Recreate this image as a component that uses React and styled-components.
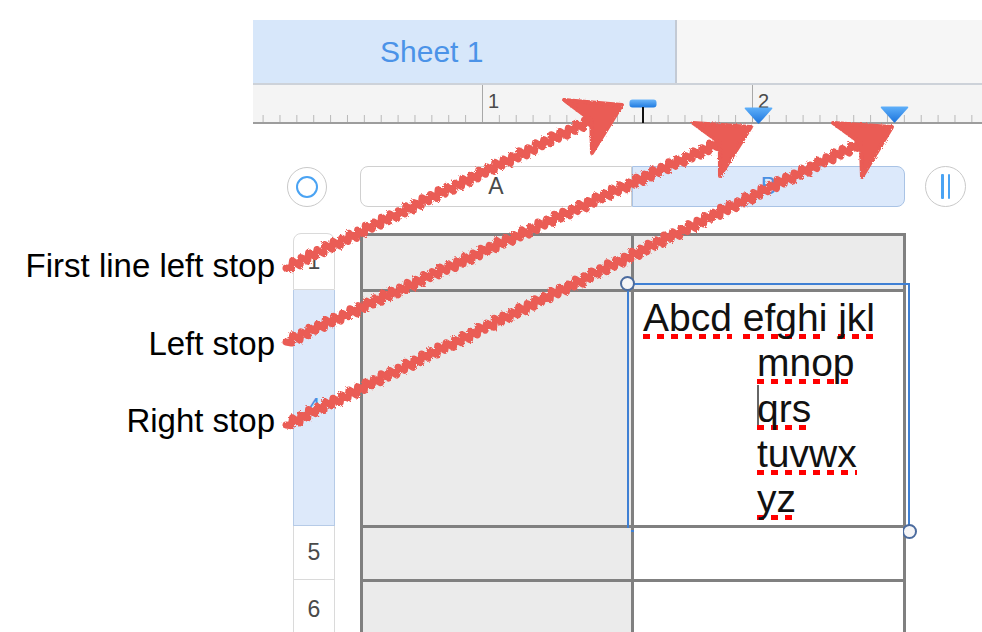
import styled, { createGlobalStyle } from "styled-components";

const GlobalStyle = createGlobalStyle`
  html, body {
    margin: 0;
    padding: 0;
    background: #fff;
  }
  body {
    font-family: "Liberation Sans", Arial, sans-serif;
  }
`;

const Page = styled.div`
  position: relative;
  width: 982px;
  height: 632px;
  overflow: hidden;
  background: #fff;
`;

/* ---------- top: sheet tabs and ruler ---------- */

const TopBand = styled.div`
  margin-left: 253px;
  padding-top: 20px;
`;

const TabBar = styled.div`
  display: flex;
  height: 63px;
  background: #f6f6f6;
  border-bottom: 2px solid #cdd2d9;
`;

const Tab = styled.div`
  display: flex;
  align-items: center;
  box-sizing: border-box;
  width: 424px;
  padding-left: 127px;
  background: #d7e7fa;
  border-right: 2px solid #c3cad4;
  color: #4b93e8;
  font-size: 30px;
`;

const Ruler = styled.div`
  position: relative;
  height: 37px;
  border-bottom: 2px solid #9d9d9d;
  background:
    linear-gradient(to right, #b8b8b8 0 1px, transparent 1px) 9.6px 100% / 16.875px 7px repeat-x,
    #f4f4f4;
`;

const MajorTick = styled.div`
  position: absolute;
  top: 0;
  bottom: 0;
  left: ${(p) => p.$x}px;
  width: 1px;
  background: #a8a8a8;
`;

const TickNumber = styled.span`
  position: absolute;
  top: 5px;
  left: ${(p) => p.$x + 6}px;
  color: #4a4a4a;
  font-size: 20px;
`;

const Marker = styled.svg`
  position: absolute;
  left: ${(p) => p.$x}px;
  top: ${(p) => p.$y}px;
`;

/* ---------- body: labels and sheet ---------- */

const Body = styled.div`
  display: flex;
`;

const Labels = styled.div`
  display: flex;
  flex-direction: column;
  align-items: flex-end;
  gap: 37.5px;
  box-sizing: border-box;
  width: 280px;
  padding: 122px 5px 0 0;
  color: #000;
  font-size: 33px;
  line-height: 40px;
  white-space: nowrap;
`;

const Sheet = styled.div`
  display: grid;
  grid-template-columns: 80px 546px 1fr;
  grid-template-rows: 41px auto;
  row-gap: 26px;
  padding-top: 42px;
`;

const CircleButton = styled.div`
  display: flex;
  align-items: center;
  justify-content: center;
  box-sizing: border-box;
  width: ${(p) => p.$size}px;
  height: ${(p) => p.$size}px;
  margin-left: ${(p) => p.$offset}px;
  border: 1.5px solid #c9c9c9;
  border-radius: 50%;
  background: #fff;
  align-self: center;
  gap: 4px;
`;

const Ring = styled.span`
  width: 22px;
  height: 22px;
  box-sizing: border-box;
  border: 2.5px solid #4aa3f3;
  border-radius: 50%;
`;

const Bar = styled.span`
  width: 2.5px;
  height: 25px;
  background: #4aa3f3;
  border-radius: 1px;
`;

const ColumnBar = styled.div`
  display: flex;
  height: 41px;
`;

const ColumnHead = styled.div`
  display: flex;
  align-items: center;
  justify-content: center;
  box-sizing: border-box;
  width: ${(p) => (p.$selected ? 273 : 272)}px;
  background: ${(p) => (p.$selected ? "#dce9fb" : "#fff")};
  border: 1px solid ${(p) => (p.$selected ? "#a9c3e5" : "#d0d0d0")};
  border-radius: ${(p) => (p.$selected ? "0 8px 8px 0" : "8px 0 0 8px")};
  color: ${(p) => (p.$selected ? "#4a90e2" : "#4a4a4a")};
  font-size: 23px;
`;

const ROW_SIZES = "57px 236px 54px 60px";

const RowHeads = styled.div`
  display: grid;
  grid-template-rows: ${ROW_SIZES};
  width: 42px;
  margin-left: 13px;
`;

const RowHead = styled.div`
  display: flex;
  align-items: center;
  justify-content: center;
  box-sizing: border-box;
  background: ${(p) => (p.$selected ? "#dde9fa" : "#fff")};
  border: 1px solid ${(p) => (p.$selected ? "#b6cbe7" : "#dadada")};
  border-top-width: ${(p) => (p.$first ? 1 : 0)}px;
  border-radius: ${(p) => (p.$first ? "8px 8px 0 0" : "0")};
  color: ${(p) => (p.$selected ? "#4a90e2" : "#4a4a4a")};
  font-size: 23px;
`;

const Table = styled.div`
  display: grid;
  grid-template-columns: 268px 269px;
  grid-template-rows: 53px 233px 51px 60px;
  gap: 3px;
  padding: 3px;
  background: #808080;
`;

const Cell = styled.div`
  position: relative;
  background: ${(p) => (p.$shade ? "#ebebeb" : "#fff")};
`;

const TextCell = styled(Cell)`
  box-sizing: border-box;
  padding: 3px 0 0 9px;
  color: #111;
  font-size: 39px;
  line-height: 45px;
  white-space: nowrap;
`;

const TextLine = styled.div`
  padding-left: ${(p) => p.$indent}px;
`;

const Word = styled.span`
  background: repeating-linear-gradient(to right, #f00 0 7px, transparent 7px 14px) 0 100% / 100% 5px no-repeat;
`;

const Caret = styled.span`
  display: inline-block;
  width: 1.5px;
  height: 43px;
  margin-right: -1.5px;
  vertical-align: -6px;
  background: #666;
`;

const Selection = styled.div`
  position: absolute;
  top: -9px;
  left: -7px;
  right: -7px;
  bottom: -7px;
  border: 2px solid #3f80d4;
  pointer-events: none;
`;

const Handle = styled.span`
  position: absolute;
  width: 15px;
  height: 15px;
  box-sizing: border-box;
  border: 2px solid #4b6b9e;
  border-radius: 50%;
  background: #f5f5f7;
  ${(p) => (p.$end ? "right: -9px; bottom: -9px;" : "left: -9px; top: -9px;")}
`;

/* ---------- annotation arrows ---------- */

const Overlay = styled.svg`
  position: absolute;
  inset: 0;
  pointer-events: none;
`;

const ARROWS = [
  { start: [286, 268], tip: [622, 105], w1: [564, 100], w2: [592, 153] },
  { start: [286, 342], tip: [751, 127], w1: [693, 123], w2: [720, 176] },
  { start: [286, 425], tip: [892, 127], w1: [833, 123], w2: [862, 177] },
];

function zigzag([x1, y1], [x2, y2]) {
  const dx = x2 - x1;
  const dy = y2 - y1;
  const len = Math.hypot(dx, dy);
  const ux = dx / len;
  const uy = dy / len;
  const step = 4.5;
  const n = Math.floor(len / step);
  let d = `M${x1} ${y1}`;
  for (let i = 1; i <= n; i++) {
    const t = i * step;
    const jitter = ((i * 37) % 7) / 7;
    const amp = (i % 2 ? 1 : -1) * (2.6 + jitter * 1.8);
    d += ` L${(x1 + ux * t - uy * amp).toFixed(1)} ${(y1 + uy * t + ux * amp).toFixed(1)}`;
  }
  return d + ` L${x2} ${y2}`;
}

function Arrow({ start, tip, w1, w2 }) {
  const mid = [(w1[0] + w2[0]) / 2, (w1[1] + w2[1]) / 2];
  const notch = [mid[0] + (tip[0] - mid[0]) * 0.3, mid[1] + (tip[1] - mid[1]) * 0.3];
  return (
    <g fill="#ea5b55" stroke="#ea5b55" filter="url(#rough)">
      <path d={zigzag(start, notch)} fill="none" strokeWidth="7" strokeLinejoin="round" strokeLinecap="round" />
      <polygon points={[tip, w1, notch, w2].map((p) => p.join(",")).join(" ")} strokeWidth="4" strokeLinejoin="round" />
    </g>
  );
}

const FirstLineStop = () => (
  <Marker $x={376} $y={14} width="28" height="24" viewBox="0 0 28 24">
    <defs>
      <linearGradient id="stopBlue" x1="0" y1="0" x2="0" y2="1">
        <stop offset="0" stopColor="#6cb6fa" />
        <stop offset="1" stopColor="#1f7ae0" />
      </linearGradient>
    </defs>
    <rect x="0.5" y="0.5" width="27" height="8" rx="3" fill="url(#stopBlue)" />
    <rect x="13" y="8" width="2" height="16" fill="#111" />
  </Marker>
);

const TriangleStop = ({ x, y }) => (
  <Marker $x={x} $y={y} width="29" height="17" viewBox="0 0 29 17">
    <defs>
      <linearGradient id="triBlue" x1="0" y1="0" x2="0" y2="1">
        <stop offset="0" stopColor="#5fb0fa" />
        <stop offset="1" stopColor="#1c74dc" />
      </linearGradient>
    </defs>
    <path d="M1.5 0.5 H27.5 Q29 0.5 28 2 L15.2 16.3 Q14.5 17 13.8 16.3 L1 2 Q0 0.5 1.5 0.5 Z" fill="url(#triBlue)" />
  </Marker>
);

const lines = [
  { indent: 0, words: ["Abcd", "efghi", "jkl"] },
  { indent: 114, words: ["mnop"] },
  { indent: 114, words: ["qrs"], caret: true },
  { indent: 114, words: ["tuvwx"] },
  { indent: 114, words: ["yz"] },
];

export default function App() {
  return (
    <Page>
      <GlobalStyle />
      <TopBand>
        <TabBar>
          <Tab>Sheet 1</Tab>
        </TabBar>
        <Ruler>
          <MajorTick $x={229} />
          <TickNumber $x={229}>1</TickNumber>
          <MajorTick $x={499} />
          <TickNumber $x={499}>2</TickNumber>
          <FirstLineStop />
          <TriangleStop x={491} y={22} />
          <TriangleStop x={627} y={21} />
        </Ruler>
      </TopBand>

      <Body>
        <Labels>
          <span>First line left stop</span>
          <span>Left stop</span>
          <span>Right stop</span>
        </Labels>

        <Sheet>
          <CircleButton $size={40} $offset={7}>
            <Ring />
          </CircleButton>
          <ColumnBar>
            <ColumnHead>A</ColumnHead>
            <ColumnHead $selected>B</ColumnHead>
          </ColumnBar>
          <CircleButton $size={41} $offset={19}>
            <Bar />
            <Bar />
          </CircleButton>

          <RowHeads>
            <RowHead $first>1</RowHead>
            <RowHead $selected>4</RowHead>
            <RowHead>5</RowHead>
            <RowHead>6</RowHead>
          </RowHeads>
          <Table>
            <Cell $shade />
            <Cell $shade />
            <Cell $shade />
            <TextCell>
              {lines.map((line, i) => (
                <TextLine key={i} $indent={line.indent}>
                  {line.caret && <Caret />}
                  {line.words.map((w, j) => (
                    <span key={w}>
                      {j > 0 && " "}
                      <Word>{w}</Word>
                    </span>
                  ))}
                </TextLine>
              ))}
              <Selection>
                <Handle />
                <Handle $end />
              </Selection>
            </TextCell>
            <Cell $shade />
            <Cell />
            <Cell $shade />
            <Cell />
          </Table>
        </Sheet>
      </Body>

      <Overlay width="982" height="632" viewBox="0 0 982 632">
        <defs>
          <filter id="rough" x="-5%" y="-5%" width="110%" height="110%">
            <feTurbulence type="fractalNoise" baseFrequency="0.8" numOctaves="2" seed="3" />
            <feDisplacementMap in="SourceGraphic" scale="3" />
          </filter>
        </defs>
        {ARROWS.map((a, i) => (
          <Arrow key={i} {...a} />
        ))}
      </Overlay>
    </Page>
  );
}
